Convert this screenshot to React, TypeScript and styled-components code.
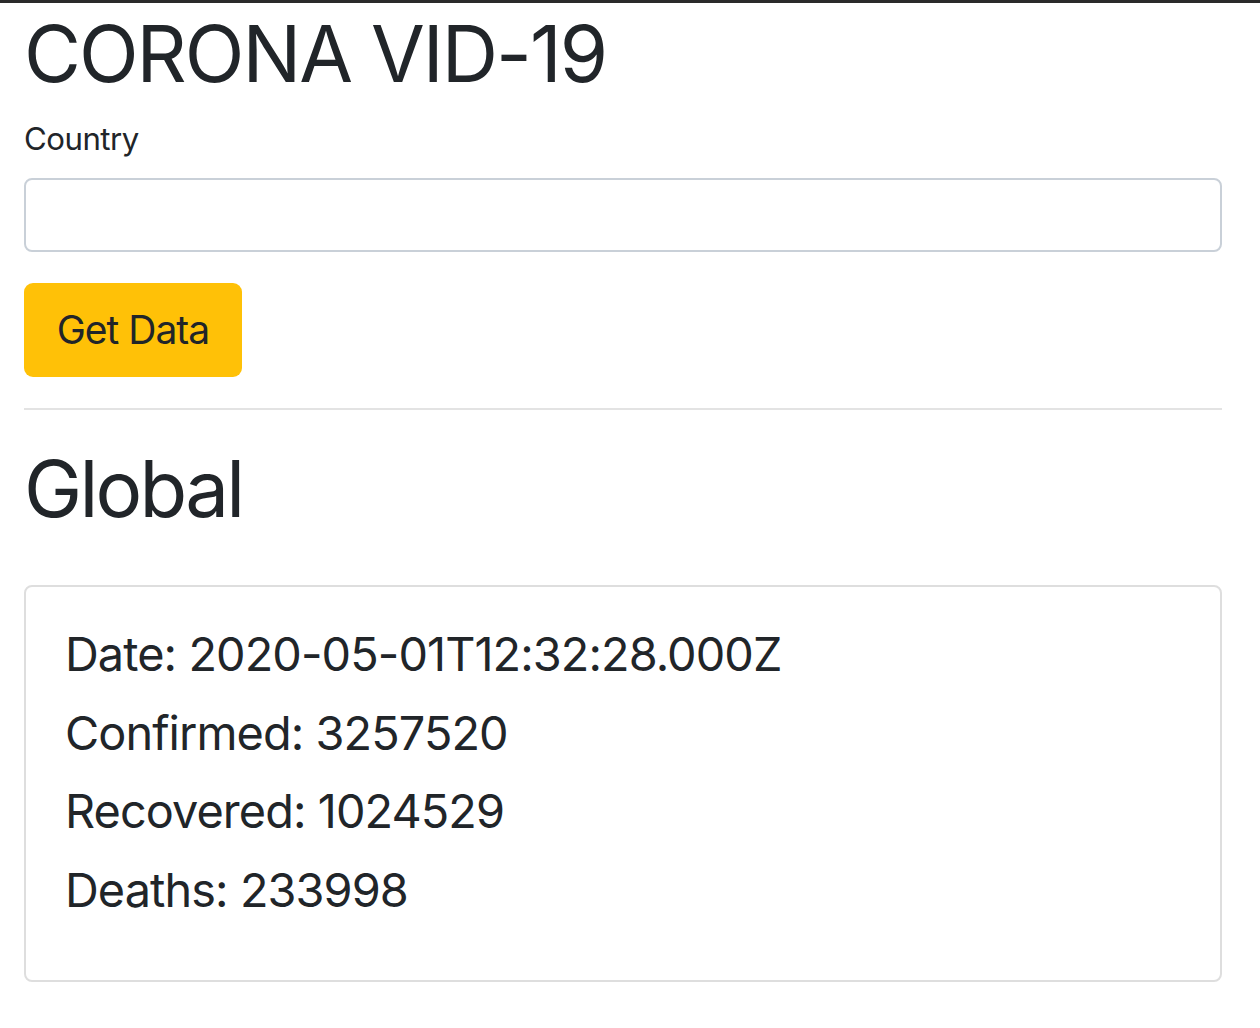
import * as React from 'react';
import styled, { createGlobalStyle } from 'styled-components';

const GlobalStyle = createGlobalStyle`
    html, body {
        margin: 0;
        padding: 0;
        background: #fff;
    }
    body {
        font-family: Inter, 'Noto Sans', 'Liberation Sans', sans-serif;
        color: #212529;
    }
    * {
        box-sizing: border-box;
    }
`;

const TopBar = styled.div`
    height: 3px;
    background: #2a2a2a;
`;

const Container = styled.div`
    width: 1198px;
    margin-left: 24px;
    padding-bottom: 40px;
`;

const Heading = styled.h1<{ top?: number; tight?: number }>`
    margin: ${(props) => props.top || 0}px 0 15.6px 0;
    font-size: 78px;
    font-weight: 400;
    line-height: 93.6px;
    letter-spacing: ${(props) => props.tight || -2}px;
`;

const FormGroup = styled.div`
    margin-bottom: 31.2px;
`;

const Label = styled.label`
    display: block;
    font-size: 31.2px;
    line-height: 46.8px;
    letter-spacing: -0.5px;
    margin-bottom: 15.6px;
`;

const Input = styled.input`
    display: block;
    width: 100%;
    height: 74px;
    border: 2px solid #c9d0d8;
    border-radius: 8px;
    padding: 0 24px;
    font-size: 31.2px;
    font-family: inherit;
    color: #495057;
    outline: none;
`;

const Button = styled.button`
    display: block;
    height: 94px;
    width: 218px;
    padding: 0;
    border: none;
    border-radius: 9px;
    background: #ffc107;
    color: #212529;
    font-family: inherit;
    font-size: 39px;
    line-height: 58px;
    letter-spacing: -1px;
    text-align: center;
`;

const Divider = styled.hr`
    margin: 31.2px 0;
    border: 0;
    border-top: 2px solid #e3e3e3;
`;

const Card = styled.div`
    margin-top: 49.6px;
    border: 2px solid #dedede;
    border-radius: 8px;
    padding: 39px;
`;

const Stat = styled.h4`
    margin: 0 0 22.5px 0;
    font-size: 46.8px;
    font-weight: 400;
    line-height: 56.2px;
    letter-spacing: -0.9px;
`;

const stats = [
    { label: 'Date', value: '2020-05-01T12:32:28.000Z' },
    { label: 'Confirmed', value: '3257520' },
    { label: 'Recovered', value: '1024529' },
    { label: 'Deaths', value: '233998' },
];

export default function App() {
    const [country, setCountry] = React.useState('');

    return (
        <>
            <GlobalStyle />
            <TopBar />
            <Container>
                <Heading top={3.5}>CORONA VID-19</Heading>
                <FormGroup>
                    <Label htmlFor="country">Country</Label>
                    <Input id="country" value={country} onChange={(e) => setCountry(e.target.value)} />
                </FormGroup>
                <Button>Get Data</Button>
                <Divider />
                <Heading tight={-2.8}>Global</Heading>
                <Card>
                    {stats.map((s) => (
                        <Stat key={s.label}>
                            {s.label}: {s.value}
                        </Stat>
                    ))}
                </Card>
            </Container>
        </>
    );
}
